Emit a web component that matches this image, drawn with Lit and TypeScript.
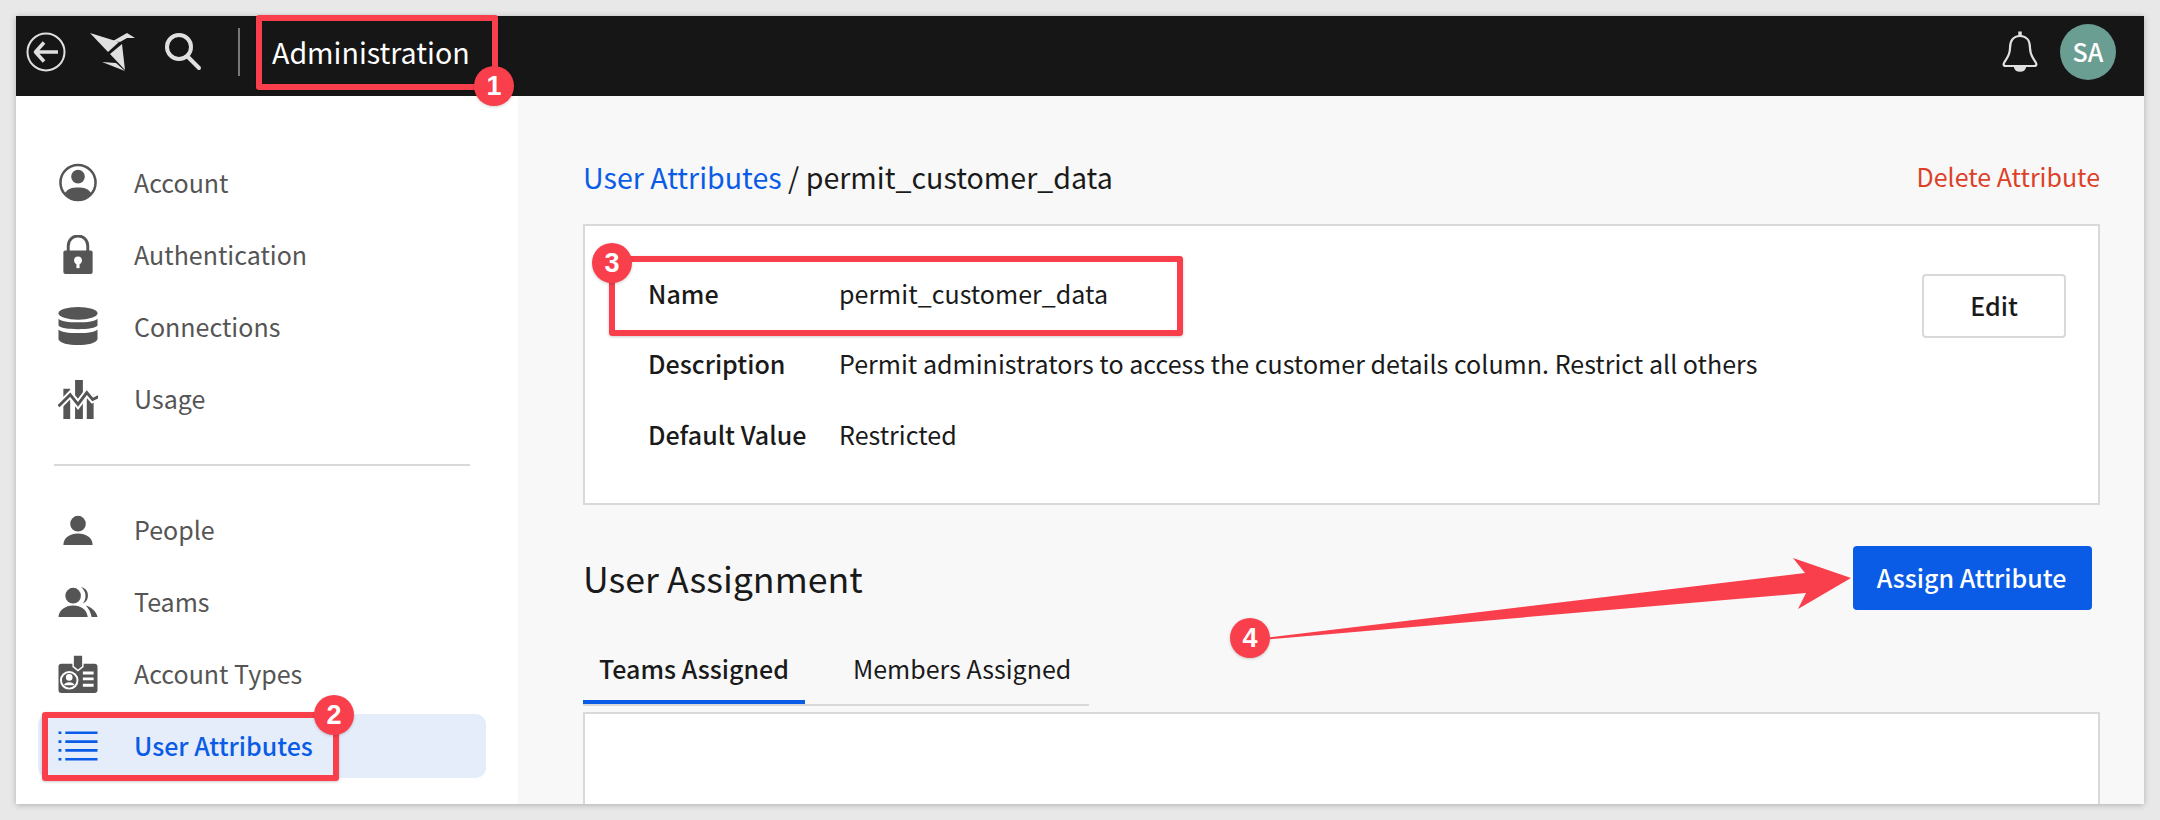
import { LitElement, html, css, svg } from 'lit';
import { customElement } from 'lit/decorators.js';

const navTop = [
  {
    label: 'Account',
    icon: svg`<circle cx="20" cy="20" r="18" fill="none" stroke="currentColor" stroke-width="2.6"/><circle cx="20" cy="14" r="7"/><path d="M6 32C9 26 14 25 20 25S31 26 34 32A18 18 0 0 1 6 32Z"/>`,
  },
  {
    label: 'Authentication',
    icon: svg`<path d="M10 18V11a10 10 0 0 1 20 0V18" fill="none" stroke="currentColor" stroke-width="3"/><rect x="5" y="16" width="30" height="24" rx="2"/><circle cx="20" cy="26" r="4" fill="#fff"/><rect x="18.4" y="27" width="3.2" height="7" fill="#fff"/>`,
  },
  {
    label: 'Connections',
    icon: svg`<ellipse cx="20" cy="6.5" rx="20" ry="6.5"/><path d="M0 12C3 17 37 17 40 12V19C38 24 2 24 0 19Z"/><path d="M0 23C3 28 37 28 40 23V33C38 41 2 41 0 33Z"/>`,
  },
  {
    label: 'Usage',
    icon: svg`<rect x="5" y="10" width="7" height="31"/><rect x="17" y="1" width="8" height="40"/><rect x="29" y="16" width="7" height="25"/><polyline points="0,28 12,16 20,26 29,14 35,21 41,18" fill="none" stroke="#fff" stroke-width="7"/><polyline points="0,28 12,16 20,26 29,14 35,21 41,18" fill="none" stroke="currentColor" stroke-width="3"/>`,
  },
];

const navBottom = [
  {
    label: 'People',
    icon: svg`<circle cx="20" cy="14" r="8"/><path d="M5 36C5 28 12 24 20 24S35 28 35 36Z"/>`,
  },
  {
    label: 'Teams',
    icon: svg`<circle cx="15" cy="14" r="8"/><path d="M0 36C0 29 7 24 15 24S29 28 30 36Z"/><path d="M23 5A9 9 0 0 1 25 22A12 12 0 0 0 23 5Z"/><path d="M28 24C34 26 39 30 40 36H34C33 31 31 27 28 24Z"/>`,
  },
  {
    label: 'Account Types',
    icon: svg`<rect x="0" y="10" width="40" height="30" rx="3"/><polygon points="15,1 25,1 25,13 20,17 15,13" stroke="#fff" stroke-width="1.5"/><circle cx="11" cy="27" r="8.5" fill="none" stroke="#fff" stroke-width="2"/><circle cx="11" cy="24" r="3.4" fill="#fff"/><path d="M5.5 32C6.5 28 15.5 28 16.5 32Z" fill="#fff"/><path d="M25 19.5H36M25 25.5H36M25 32H36" stroke="#fff" stroke-width="3"/>`,
  },
];

@customElement('app-root')
export class AppRoot extends LitElement {
  static styles = css`
    :host {
      display: block;
      position: relative;
      width: 2160px;
      height: 820px;
      padding: 16px;
      box-sizing: border-box;
      background: #e8e8e8;
      font-family: 'Noto Sans CJK JP', 'Noto Sans', sans-serif;
      color: #1a1a1a;
      overflow: hidden;
    }

    .window {
      height: 788px;
      display: flex;
      flex-direction: column;
      overflow: hidden;
      box-shadow: 0 1px 6px rgba(0, 0, 0, 0.25);
    }

    .topbar {
      flex: 0 0 80px;
      box-sizing: border-box;
      padding-bottom: 8px;
      display: flex;
      align-items: center;
      background: #161616;
      color: #e0e0e0;
    }

    .topbar svg {
      display: block;
      flex: none;
    }

    .back {
      margin-left: 10px;
    }

    .logo {
      margin-left: 24px;
    }

    .search {
      margin-left: 28px;
    }

    .sep {
      width: 2px;
      height: 48px;
      margin-left: 36px;
      background: #777;
    }

    .title {
      margin-left: 32px;
      font-size: 28.6px;
      color: #fff;
      line-height: 1;
    }

    .bell {
      margin-left: auto;
    }

    .avatar {
      width: 56px;
      height: 56px;
      margin: 0 28px 0 22px;
      padding-bottom: 2px;
      box-sizing: border-box;
      border-radius: 50%;
      background: #6a9e92;
      color: #fff;
      font-size: 25px;
      font-weight: 500;
      display: flex;
      align-items: center;
      justify-content: center;
    }

    .body {
      flex: 1;
      display: flex;
      min-height: 0;
    }

    .sidebar {
      flex: 0 0 502px;
      box-sizing: border-box;
      padding: 55px 32px 0 22px;
      background: #fff;
    }

    .nav {
      display: flex;
      flex-direction: column;
      gap: 8px;
    }

    .item {
      height: 64px;
      padding-left: 20px;
      display: flex;
      align-items: center;
      gap: 36px;
      border-radius: 10px;
      font-size: 25px;
      color: #555;
    }

    .item span {
      padding-bottom: 2px;
    }

    .item svg {
      width: 40px;
      height: 40px;
      flex: none;
      fill: currentColor;
    }

    .item.active {
      background: #e5edfa;
      color: #0a5ce6;
      font-weight: 500;
    }

    .divider {
      height: 2px;
      margin: 33px 16px 32px 16px;
      background: #d9d9d9;
    }

    .main {
      flex: 1;
      box-sizing: border-box;
      padding: 54px 44px 0 65px;
      background: #f8f8f8;
      min-width: 0;
    }

    .crumbs {
      height: 56px;
      padding-bottom: 4px;
      box-sizing: border-box;
      display: flex;
      align-items: center;
      justify-content: space-between;
      font-size: 28.6px;
    }

    .crumbs a {
      color: #0a5ce6;
    }

    .delete {
      font-size: 25px;
      color: #dc4128;
    }

    .card {
      margin-top: 18px;
      height: 281px;
      box-sizing: border-box;
      padding: 33px 32px 0 63px;
      display: flex;
      justify-content: space-between;
      align-items: flex-start;
      background: #fff;
      border: 2px solid #d9d9d9;
    }

    .rows {
      display: grid;
      grid-template-columns: 191px auto;
      grid-auto-rows: 70.5px;
      align-items: center;
      font-size: 25.05px;
    }

    .rows > * {
      padding-bottom: 3px;
    }

    .rows b {
      font-weight: 500;
    }

    .edit {
      width: 144px;
      height: 64px;
      margin-top: 15px;
      padding: 0 0 2px;
      box-sizing: border-box;
      border: 2px solid #d9d9d9;
      border-radius: 4px;
      background: #fff;
      font: 500 25px 'Noto Sans CJK JP', sans-serif;
      color: #1a1a1a;
    }

    .assign-row {
      margin-top: 41px;
      padding-right: 8px;
      display: flex;
      align-items: center;
      justify-content: space-between;
    }

    h2 {
      margin: 0;
      padding-bottom: 2px;
      font-size: 35.7px;
      font-weight: 400;
    }

    .assign {
      width: 239px;
      height: 64px;
      padding: 0 2px 2px 0;
      border: 0;
      border-radius: 4px;
      background: #0a5ce6;
      color: #fff;
      font: 500 25px 'Noto Sans CJK JP', sans-serif;
    }

    .tabs {
      width: 506px;
      margin-top: 30px;
      display: flex;
      border-bottom: 2px solid #d9d9d9;
      font-size: 25px;
    }

    .tab {
      height: 64px;
      box-sizing: border-box;
      padding: 0 16px 8px;
      flex: none;
      white-space: nowrap;
      display: flex;
      align-items: center;
      margin-right: 32px;
    }

    .tab.on {
      font-weight: 500;
      border-bottom: 4px solid #0a5ce6;
      padding-bottom: 4px;
    }

    .panel {
      height: 200px;
      margin-top: 6px;
      background: #fff;
      border: 2px solid #d9d9d9;
    }

    .marks {
      position: absolute;
      left: 0;
      top: 0;
      width: 2160px;
      height: 820px;
      pointer-events: none;
    }

    .box {
      position: absolute;
      box-sizing: border-box;
      border: 6px solid #f93f4c;
      border-radius: 3px;
      box-shadow: 0 1px 3px rgba(0, 0, 0, 0.2);
    }

    .box-1 {
      left: 256px;
      top: 15px;
      width: 242px;
      height: 75px;
    }

    .box-2 {
      left: 42px;
      top: 712px;
      width: 297px;
      height: 69px;
    }

    .box-3 {
      left: 609px;
      top: 256px;
      width: 574px;
      height: 80px;
    }

    .pin {
      position: absolute;
      width: 40px;
      height: 40px;
      border-radius: 50%;
      background: #f93f4c;
      color: #fff;
      font: 700 27px 'Liberation Sans', sans-serif;
      display: flex;
      align-items: center;
      justify-content: center;
      box-shadow: 0 1px 3px rgba(0, 0, 0, 0.2);
    }

    .pin-1 {
      left: 474px;
      top: 66px;
    }

    .pin-2 {
      left: 314px;
      top: 695px;
    }

    .pin-3 {
      left: 592px;
      top: 243px;
    }

    .pin-4 {
      left: 1230px;
      top: 618px;
    }

    .arrow {
      position: absolute;
      left: 0;
      top: 0;
    }
  `;

  private renderItem(it: { label: string; icon: unknown }) {
    return html`<div class="item">
      <svg viewBox="0 0 40 41">${it.icon}</svg>
      <span>${it.label}</span>
    </div>`;
  }

  render() {
    return html`
      <div class="window">
        <header class="topbar">
          <svg class="back" width="40" height="40" viewBox="0 0 40 40" fill="none" stroke="currentColor">
            <circle cx="20" cy="20" r="18.5" stroke-width="2" />
            <path d="M32 20H10M18 10.5L9.5 20L18 29.5" stroke-width="3.5" stroke-linejoin="round" />
          </svg>
          <svg class="logo" width="46" height="40" viewBox="0 0 46 40" fill="currentColor">
            <polygon points="0,1 29,10 18,20" />
            <polygon points="32,12 35,38 20,22" />
            <polygon points="12,30 26,31 35,39" />
            <polygon points="23,9 37,1 45,6 37,6 30,10" />
          </svg>
          <svg class="search" width="38" height="40" viewBox="0 0 38 40" fill="none" stroke="currentColor" stroke-width="4" stroke-linecap="round">
            <circle cx="15" cy="15" r="12" />
            <path d="M24 25L35 36" />
          </svg>
          <div class="sep"></div>
          <div class="title">Administration</div>
          <svg class="bell" width="36" height="42" viewBox="0 0 36 42" fill="none" stroke="currentColor" stroke-width="2.2">
            <path d="M18 5C11 5 8 10 8 17C8 25 4 28 2 32C1 34 2 35 4 35H32C34 35 35 34 34 32C32 28 28 25 28 17C28 10 25 5 18 5Z" />
            <path d="M18 0.5V5" stroke-width="3.5" />
            <path d="M13 36C14 41 22 41 23 36Z" fill="currentColor" />
          </svg>
          <div class="avatar">SA</div>
        </header>
        <div class="body">
          <nav class="sidebar">
            <div class="nav">${navTop.map((it) => this.renderItem(it))}</div>
            <div class="divider"></div>
            <div class="nav">
              ${navBottom.map((it) => this.renderItem(it))}
              <div class="item active">
                <svg viewBox="0 0 40 41">
                  <path d="M0 7H3M7 7H40M0 16H3M7 16H40M0 25H3M7 25H40M0 34H3M7 34H40" stroke="currentColor" stroke-width="2.6" />
                </svg>
                <span>User Attributes</span>
              </div>
            </div>
          </nav>
          <main class="main">
            <div class="crumbs">
              <div><a>User Attributes</a> / permit_customer_data</div>
              <span class="delete">Delete Attribute</span>
            </div>
            <section class="card">
              <div class="rows">
                <b>Name</b><span>permit_customer_data</span>
                <b>Description</b><span>Permit administrators to access the customer details column. Restrict all others</span>
                <b>Default Value</b><span>Restricted</span>
              </div>
              <button class="edit">Edit</button>
            </section>
            <div class="assign-row">
              <h2>User Assignment</h2>
              <button class="assign">Assign Attribute</button>
            </div>
            <div class="tabs">
              <div class="tab on">Teams Assigned</div>
              <div class="tab">Members Assigned</div>
            </div>
            <div class="panel"></div>
          </main>
        </div>
      </div>
      <div class="marks">
        <div class="box box-1"></div>
        <div class="box box-2"></div>
        <div class="box box-3"></div>
        <svg class="arrow" width="2160" height="820" viewBox="0 0 2160 820">
          <polygon points="1250,639.7 1805,573 1793,558 1851,578 1798,609 1806,593 1250,641" fill="#f93f4c" />
        </svg>
        <div class="pin pin-1">1</div>
        <div class="pin pin-2">2</div>
        <div class="pin pin-3">3</div>
        <div class="pin pin-4">4</div>
      </div>
    `;
  }
}
